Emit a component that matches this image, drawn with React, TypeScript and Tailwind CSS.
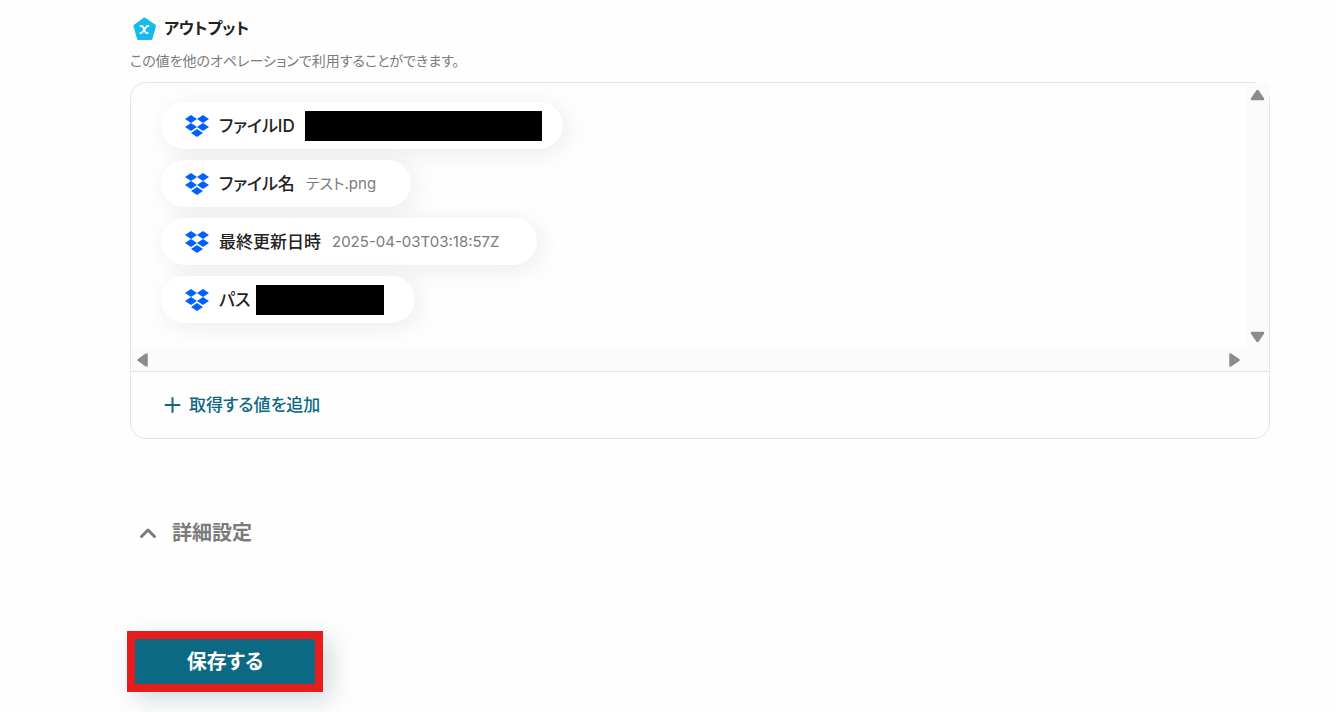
import React from "react";

interface OutputValue {
  id: string;
  label: string;
  value?: string;
  // class names for values that stay hidden
  mask?: string;
  pill: string;
}

const outputs: OutputValue[] = [
  { id: "file_id", label: "ファイルID", mask: "w-[237px] ml-2.5", pill: "w-[402px]" },
  { id: "file_name", label: "ファイル名", value: "テスト.png", pill: "w-[250px]" },
  { id: "updated_at", label: "最終更新日時", value: "2025-04-03T03:18:57Z", pill: "w-[376px]" },
  { id: "path", label: "パス", mask: "w-32 ml-1.5", pill: "w-[254px]" },
];

function DropboxIcon() {
  return (
    <svg viewBox="0 0 24 22" className="w-6 h-[22px] shrink-0" fill="#0061fe" aria-hidden="true">
      <path d="M6 0l6 4-6 4-6-4zM18 0l6 4-6 4-6-4zM6 8l6 4-6 4-6-4zM18 8l6 4-6 4-6-4zM12 14l6 4-6 4-6-4z" />
    </svg>
  );
}

function OutputIcon() {
  return (
    <svg viewBox="0 0 24 24" className="w-6 h-6 shrink-0" aria-hidden="true">
      <path
        d="M12.500 3L22.500 10L19 22.500H6.500L3 10Z"
        fill="#14bbee"
        stroke="#14bbee"
        strokeWidth="3"
        strokeLinejoin="round"
      />
      <path
        d="M8.500 10h1c.8 0 1.300.4 1.700 1.200l1.900 4.600c.3.8.8 1.200 1.600 1.200h1M16.500 10h-.5c-.8 0-1.300.4-1.800 1l-3.600 5c-.5.700-1 1-1.800 1h-.5"
        fill="none"
        stroke="#fff"
        strokeWidth="1.800"
        strokeLinecap="round"
      />
    </svg>
  );
}

// Rounded triangle, pointing up unless rotated
function Arrow({ className }: { className: string }) {
  return (
    <svg viewBox="0 0 15 12" className={`w-[15px] h-3 ${className}`} aria-hidden="true">
      <path d="M7.500 2L13 10H2Z" fill="#8b8b8b" stroke="#8b8b8b" strokeWidth="2.500" strokeLinejoin="round" />
    </svg>
  );
}

function OutputPill({ item }: { item: OutputValue }) {
  return (
    <li
      className={`flex items-center h-[47px] pl-6 rounded-full bg-white whitespace-nowrap shadow-[4px_4px_24px_rgba(0,0,0,0.08)] ${item.pill}`}
    >
      <DropboxIcon />
      <span className="ml-2.5 text-[17px] leading-6 font-medium">{item.label}</span>
      {item.value && <span className="ml-[11px] text-[15px] leading-6 text-[#7b7b7b]">{item.value}</span>}
      {item.mask && <span className={`h-[30px] bg-black shrink-0 ${item.mask}`} />}
    </li>
  );
}

export default function App() {
  return (
    <main className="min-h-screen bg-[#fefefe] pl-[130px] pr-[66px] pt-4 pb-5 text-[#222] font-['Inter','Noto_Sans_CJK_JP',sans-serif] [font-feature-settings:'palt']">
      {/* Heading */}
      <div className="flex items-center gap-2 pl-0.5">
        <OutputIcon />
        <h2 className="text-base leading-6 font-bold">アウトプット</h2>
      </div>
      <p className="mt-[11px] text-sm leading-5 text-[#7b7b7b]">
        この値を他のオペレーションで利用することができます。
      </p>

      {/* Output values */}
      <section className="mt-[11px] border border-[#e5e5e5] rounded-2xl">
        <div className="grid grid-cols-[1fr_23px] grid-rows-[265px_23px] border-b border-[#e5e5e5]">
          <ul className="flex flex-col gap-[11px] pl-[30px] pt-[19px] overflow-hidden rounded-tl-2xl">
            {outputs.map((item) => (
              <OutputPill key={item.id} item={item} />
            ))}
          </ul>
          <div className="bg-[#fbfbfb] flex flex-col items-center justify-between pt-1.5 pb-[5px]">
            <Arrow className="" />
            <Arrow className="rotate-180" />
          </div>
          <div className="bg-[#fbfbfb] flex items-center justify-between px-1">
            <Arrow className="-rotate-90" />
            <Arrow className="rotate-90" />
          </div>
          <div className="bg-[#fbfbfb]" />
        </div>
        <div className="h-[66px] pl-[33px] flex items-center">
          <button type="button" className="flex items-center gap-2 text-[17px] leading-6 font-medium text-[#0b6983]">
            <svg viewBox="0 0 17 17" className="w-[17px] h-[17px]" aria-hidden="true">
              <path d="M8.500 1v14M1.500 8h14" stroke="currentColor" strokeWidth="2" strokeLinecap="round" />
            </svg>
            取得する値を追加
          </button>
        </div>
      </section>

      {/* Advanced settings toggle */}
      <button
        type="button"
        className="mt-20 ml-2 flex items-center gap-3.5 text-[20px] leading-7 font-semibold text-[#7b7b7b]"
      >
        <svg viewBox="0 0 20 20" className="w-5 h-5" fill="none" aria-hidden="true">
          <path d="M3.500 13.500l6.500-6.500 6.500 6.500" stroke="currentColor" strokeWidth="3" strokeLinecap="round" strokeLinejoin="round" />
        </svg>
        詳細設定
      </button>

      <button
        type="button"
        className="mt-[84px] -ml-[3px] w-[196px] h-[61px] border-8 border-[#e71d1d] bg-[#0b6983] text-white text-[20px] leading-6 font-bold shadow-[8px_8px_24px_rgba(11,60,80,0.18)]"
      >
        保存する
      </button>
    </main>
  );
}
